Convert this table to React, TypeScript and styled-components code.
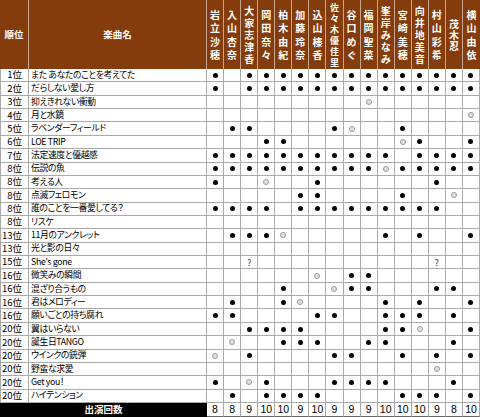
import styled, { createGlobalStyle } from 'styled-components'

const GlobalStyle = createGlobalStyle`
  html, body {
    margin: 0;
    padding: 0;
    background: #fff;
  }
  body {
    font-family: "Noto Sans CJK JP", "Noto Sans", sans-serif;
    font-feature-settings: "palt";
  }
`

const LINE = '#a9a9a9'
const BROWN = '#843c0c'

const Sheet = styled.div`
  display: grid;
  grid-template-columns: 29px 178px repeat(16, minmax(0, 1fr));
  grid-template-rows: 69px repeat(25, 13.36px) 14px;
  width: 480px;
  height: 417px;
  overflow: hidden;
  font-size: 9px;
  line-height: 1;
  color: #000;

  & > div {
    box-sizing: border-box;
    min-height: 0;
    min-width: 0;
  }
`

const HeadCell = styled.div`
  display: flex;
  align-items: center;
  justify-content: center;
  background: ${BROWN};
  color: #fff;
  font-weight: bold;
  font-size: 9.5px;
  border-right: 1px solid #c8a68b;
  &:nth-child(18) {
    border-right: none;
  }
`

const NameStack = styled.div<{ $step: number; $size: number }>`
  display: flex;
  flex-direction: column;
  align-items: center;
  font-size: ${p => p.$size}px;
  line-height: ${p => p.$step}px;
`

const Row = styled.div`
  display: contents;
`

const RankCell = styled.div`
  display: flex;
  align-items: center;
  justify-content: flex-end;
  padding-right: 6px;
  font-size: 9.5px;
  border-left: 1px solid ${LINE};
  border-right: 1px solid ${LINE};
  border-bottom: 1px solid ${LINE};
  white-space: nowrap;
`

const TitleCell = styled.div`
  display: flex;
  align-items: center;
  padding-left: 2px;
  font-size: 8.8px;
  letter-spacing: -0.35px;
  border-right: 1px solid ${LINE};
  border-bottom: 1px solid ${LINE};
  white-space: nowrap;
`

const MarkCell = styled.div`
  display: flex;
  align-items: center;
  justify-content: center;
  border-right: 1px solid ${LINE};
  border-bottom: 1px solid ${LINE};
`

const Mark = styled.span<{ $kind: string }>`
  display: block;
  box-sizing: border-box;
  border-radius: 50%;
  ${p =>
    p.$kind === 'B'
      ? `width: 5px; height: 5px; background: #000;`
      : `width: 6px; height: 6px; border: 1.5px solid #9a9a9a; background: #e2e2e2;`}
`

const Unknown = styled.span`
  font-size: 8.5px;
  color: #333;
`

const TotalLabel = styled.div`
  grid-column: span 2;
  display: flex;
  align-items: center;
  justify-content: center;
  background: #000;
  color: #fff;
  font-weight: bold;
  font-size: 9.5px;
`

const TotalCell = styled.div`
  display: flex;
  align-items: center;
  justify-content: center;
  font-family: "Liberation Sans", sans-serif;
  font-size: 10.5px;
  border-right: 1px solid ${LINE};
  border-bottom: 1px solid #666;
`

const members = [
  '岩立沙穂', '入山杏奈', '大家志津香', '岡田奈々', '柏木由紀', '加藤玲奈', '込山榛香', '佐々木優佳里',
  '谷口めぐ', '福岡聖菜', '峯岸みなみ', '宮崎美穂', '向井地美音', '村山彩希', '茂木忍', '横山由依',
]

const songs: [string, string, string][] = [
  ['1位', 'また あなたのことを考えてた', 'B.BBBBBBBBBBBBBB'],
  ['2位', 'だらしない愛し方', 'B.BBBBBBBBBBBBBB'],
  ['3位', '抑えきれない衝動', '.........O......'],
  ['4位', '月と水鏡', '...............O'],
  ['5位', 'ラベンダーフィールド', '.BB....BO..B....'],
  ['6位', 'LOE TRIP', '...BB......OB..B'],
  ['7位', '法定速度と優越感', 'BBBBBBBBBBB.BBBB'],
  ['8位', '伝説の魚', 'BBBBBBBBBBOBBBBB'],
  ['8位', '考える人', 'B..O..B......B..'],
  ['8位', '点滅フェロモン', '.....BB....B..O.'],
  ['8位', '誰のことを一番愛してる？', 'BBBB.BBBBBBBBB..'],
  ['8位', 'リスケ', '................'],
  ['13位', '11月のアンクレット', '.BBBO.....B.B..B'],
  ['13位', '光と影の日々', '................'],
  ['15位', "She's gone", '..?..........?..'],
  ['16位', '微笑みの瞬間', '......O.BB......'],
  ['16位', '混ざり合うもの', '....B..OBB...BB.'],
  ['16位', '君はメロディー', '.B..BO....B.B..B'],
  ['16位', '願いごとの持ち腐れ', 'BB....BB..BBB.B.'],
  ['20位', '翼はいらない', '..BBBB....BBO..B'],
  ['20位', '誕生日TANGO', '.O..BBB..BB...B.'],
  ['20位', 'ウインクの銃弾', 'O.B....BB..B.B.B'],
  ['20位', '野蛮な求愛', '.............O..'],
  ['20位', 'Get you！', 'B.OB...BBBB...B.'],
  ['20位', 'ハイテンション', '.B.BBBB....BBB.B'],
]

function nameLayout(name: string) {
  if (name.length >= 6) return { step: 11, size: 9 }
  if (name.length === 5) return { step: 12, size: 10 }
  if (name.length === 3) return { step: 11, size: 10 }
  return { step: 13.5, size: 10 }
}

export default function App() {
  const totals = members.map((_, i) => songs.filter(s => s[2][i] === 'B').length)

  return (
    <>
      <GlobalStyle />
      <Sheet>
        <HeadCell>順位</HeadCell>
        <HeadCell>楽曲名</HeadCell>
        {members.map(name => {
          const l = nameLayout(name)
          return (
            <HeadCell key={name}>
              <NameStack $step={l.step} $size={l.size}>
                {name.split('').map((ch, i) => (
                  <span key={i}>{ch}</span>
                ))}
              </NameStack>
            </HeadCell>
          )
        })}

        {songs.map(([rank, title, marks], r) => (
          <Row key={r}>
            <RankCell>{rank}</RankCell>
            <TitleCell>{title}</TitleCell>
            {marks.split('').map((m, i) => (
              <MarkCell key={i}>
                {m === '?' ? <Unknown>?</Unknown> : m !== '.' ? <Mark $kind={m} /> : null}
              </MarkCell>
            ))}
          </Row>
        ))}

        <TotalLabel>出演回数</TotalLabel>
        {totals.map((n, i) => (
          <TotalCell key={i}>{n}</TotalCell>
        ))}
      </Sheet>
    </>
  )
}
